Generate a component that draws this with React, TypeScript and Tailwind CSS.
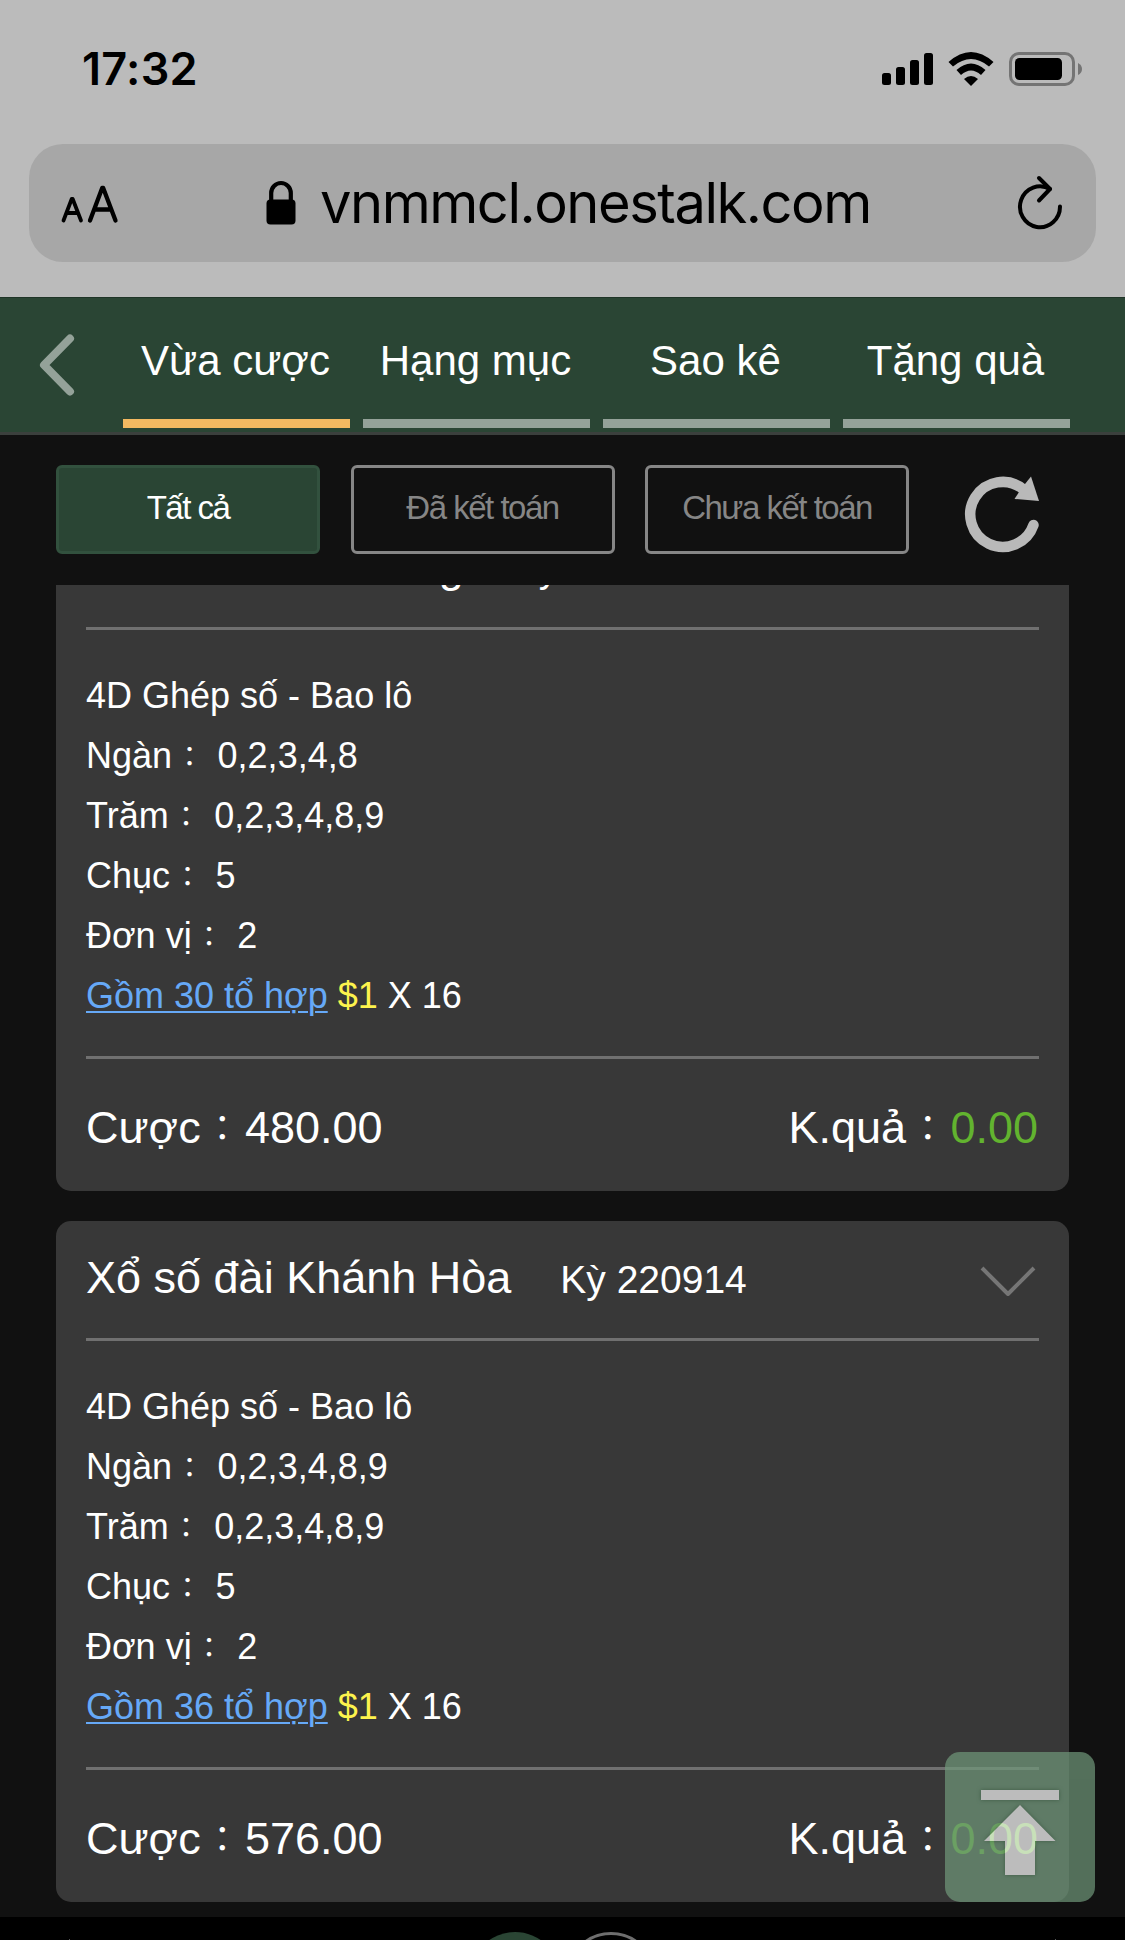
import React from "react";

const tabs = ["Vừa cược", "Hạng mục", "Sao kê", "Tặng quà"];
const filters = ["Tất cả", "Đã kết toán", "Chưa kết toán"];

type Bet = {
  title: string;
  period: string;
  rows: [string, string][];
  combos: string;
  stake: string;
  result: string;
};

const bets: Bet[] = [
  {
    title: "Xổ số đài Đà Nẵng",
    period: "Kỳ 220914",
    rows: [
      ["Ngàn", "0,2,3,4,8"],
      ["Trăm", "0,2,3,4,8,9"],
      ["Chục", "5"],
      ["Đơn vị", "2"],
    ],
    combos: "Gồm 30 tổ hợp",
    stake: "480.00",
    result: "0.00",
  },
  {
    title: "Xổ số đài Khánh Hòa",
    period: "Kỳ 220914",
    rows: [
      ["Ngàn", "0,2,3,4,8,9"],
      ["Trăm", "0,2,3,4,8,9"],
      ["Chục", "5"],
      ["Đơn vị", "2"],
    ],
    combos: "Gồm 36 tổ hợp",
    stake: "576.00",
    result: "0.00",
  },
];

function Colon() {
  return (
    <span className="relative -top-[0.05em] pr-[0.145em] pl-[0.12em] font-['Noto_Sans_CJK_TC',sans-serif] text-[0.78em] leading-none">
      ：
    </span>
  );
}

function StatusBar() {
  return (
    <div className="flex h-[144px] items-start justify-between pt-[52px] pr-[42px] pl-[82px] text-black">
      <div className="font-['Inter',sans-serif] text-[45px] leading-[34px] font-semibold tracking-[0.3px]">17:32</div>
      <svg width="201" height="34" viewBox="0 0 201 34">
        <rect x="0" y="21" width="9" height="12" rx="2.5" />
        <rect x="14" y="15" width="9" height="18" rx="2.5" />
        <rect x="28" y="8" width="9" height="25" rx="2.5" />
        <rect x="42" y="1" width="9" height="32" rx="2.5" />
        <g transform="translate(66.500 0)">
          <path d="M0 10 Q22.500 -10 45 10 L40.500 14.500 Q22.500 -0.500 4.500 14.500Z" />
          <path d="M8 18 Q22.500 5 37 18 L32.500 23 Q22.500 14 12.500 23Z" />
          <path d="M15.500 27 Q22.500 21 29.500 27 L22.500 34Z" />
        </g>
        <rect x="128.500" y="1.500" width="63" height="31" rx="8.500" fill="none" stroke="#747474" strokeWidth="3" />
        <rect x="133" y="6" width="47" height="22" rx="4.500" />
        <path d="M196 11 Q200 13 200 17 Q200 21 196 23Z" fill="#747474" />
      </svg>
    </div>
  );
}

function AddressBar() {
  return (
    <div className="mr-[29px] ml-[29px] flex h-[118px] items-center rounded-[34px] bg-[#a7a7a7] text-black">
      <svg className="ml-[31px] shrink-0" width="60" height="44" viewBox="0 0 60 44" fill="none" stroke="#000" strokeWidth="4.300" strokeLinecap="round" strokeLinejoin="round">
        <path d="M3.500 39.500 L11.700 18 H12.700 L21 39.500 M6.500 32 H17.500" strokeWidth="3.800" />
        <path d="M30 39.500 L42.200 7 H43.200 L55.500 39.500 M34.500 28.500 H50.500" />
      </svg>
      <svg className="ml-[146px] shrink-0" width="30" height="46" viewBox="0 0 30 46">
        <path d="M5.200 22 V13 A9.800 10 0 0 1 24.800 13 V22" fill="none" stroke="#000" strokeWidth="4.200" />
        <rect x="0.500" y="19.500" width="29" height="25" rx="4" />
      </svg>
      <div className="ml-[24px] font-['Inter',sans-serif] text-[56px] leading-[60px] tracking-[-1.45px] whitespace-nowrap">vnmmcl.onestalk.com</div>
      <svg className="relative -top-px mr-[31px] ml-auto shrink-0" width="50" height="56" viewBox="0 0 50 56" fill="none" stroke="#000" strokeWidth="4" strokeLinecap="round" strokeLinejoin="round">
        <path d="M45 32.500 A20 20.500 0 1 1 35 15" />
        <path d="M24 4 L35 15 L24 26.500" />
      </svg>
    </div>
  );
}

function TabBar() {
  return (
    <div className="flex h-[138px] border-t border-b-[3px] border-t-[#1f3427] border-b-[#3b403d] bg-[#2a4534]">
      <svg className="mt-[35px] ml-[38px] shrink-0" width="38" height="64" viewBox="0 0 38 64" fill="none" stroke="#94a299" strokeWidth="8" strokeLinecap="round" strokeLinejoin="round">
        <path d="M32 5.500 L6 32 L32 58.500" />
      </svg>
      <div className="ml-[47px] flex gap-[13px]">
        {tabs.map((t, i) => (
          <div
            key={t}
            className={
              "h-[130px] w-[227px] border-b-[9px] pt-[38px] pr-[2px] text-center text-[42px] leading-[50px] whitespace-nowrap text-white " +
              (i === 0 ? "border-[#f3b961]" : "border-[#94a299]")
            }
          >
            {t}
          </div>
        ))}
      </div>
    </div>
  );
}

function FilterBar() {
  return (
    <div className="flex h-[150px] items-start gap-[30.5px] pt-[30px] pl-[56px]">
      {filters.map((f, i) => (
        <div
          key={f}
          className={
            "h-[89px] w-[264px] rounded-[6px] border-[3px] text-center text-[33px] leading-[80px] tracking-[-1.5px] whitespace-nowrap " +
            (i === 0 ? "border-[#32513e] bg-[#2a4534] text-white" : "border-[#868686] text-[#868686]")
          }
        >
          {f}
        </div>
      ))}
      <svg className="mt-[10px] ml-[24px]" width="78" height="78" viewBox="0 0 78 78">
        <path d="M69.500 50 A32.500 32.500 0 1 1 59 14" fill="none" stroke="#b9b9b9" strokeWidth="10.500" strokeLinecap="round" />
        <path d="M67 1.500 L75 26 L50.500 24 L55 17 L61 9Z" fill="#b9b9b9" />
      </svg>
    </div>
  );
}

function BetCard({ bet }: { bet: Bet }) {
  return (
    <div className="h-[681px] rounded-[15px] bg-[#383838] px-[30px] text-white">
      <div className="flex h-[120px] items-start border-b-[3px] border-[#707070]">
        <div className="flex items-baseline pt-[27px] whitespace-nowrap">
          <div className="text-[45px] leading-[60px]">{bet.title}</div>
          <div className="ml-[49px] text-[39px] leading-[60px]">{bet.period}</div>
        </div>
        <svg className="mt-[45px] mr-[3px] ml-auto" width="56" height="30" viewBox="0 0 56 30" fill="none" stroke="#767676" strokeWidth="4" strokeLinejoin="round">
          <path d="M2 2 L28 28 L54 2" />
        </svg>
      </div>
      <div className="h-[429px] border-b-[3px] border-[#707070] pt-[36px] text-[36px] leading-[60px] whitespace-nowrap">
        <div className="h-[60px]">4D Ghép số - Bao lô</div>
        {bet.rows.map(([label, value]) => (
          <div key={label} className="h-[60px]">
            {label}
            <Colon /> {value}
          </div>
        ))}
        <div className="h-[60px]">
          <span className="text-[#66a9f7] underline decoration-[2px] underline-offset-[3px]">{bet.combos}</span>{" "}
          <span className="text-[#fdf34d]">$1</span> X 16
        </div>
      </div>
      <div className="flex justify-between pt-[39px] text-[45px] leading-[60px] whitespace-nowrap">
        <div>
          Cược
          <Colon />
          {bet.stake}
        </div>
        <div className="pr-px">
          K.quả
          <Colon />
          <span className="text-[#62b32f]">{bet.result}</span>
        </div>
      </div>
    </div>
  );
}

export default function App() {
  return (
    <div className="relative h-[1940px] w-[1125px] overflow-hidden bg-[#111111] font-['Liberation_Sans','Noto_Sans_CJK_TC',sans-serif]">
      <div className="h-[297px] bg-[#bbbbbb]">
        <StatusBar />
        <AddressBar />
      </div>
      <TabBar />
      <FilterBar />
      <div className="h-[1332px] overflow-hidden px-[56px]">
        <div className="-mt-[75px] flex flex-col gap-[30px]">
          {bets.map((b) => (
            <BetCard key={b.title} bet={b} />
          ))}
        </div>
      </div>
      <div className="flex h-[23px] items-start justify-between overflow-hidden bg-black pr-[69px] pl-[69px]">
        <div className="mt-[22px] h-px w-px bg-[#555]" />
        <div className="flex gap-[6px] pt-[15px]">
          <div className="size-[90px] rounded-full bg-[#2a4534]" />
          <div className="size-[90px] rounded-full border-[3px] border-[#6e6e6e]" />
        </div>
        <div className="mt-[22px] h-px w-px bg-[#555]" />
      </div>
      <div className="absolute top-[1752px] left-[945px] size-[150px] rounded-[15px] bg-[#70987a] opacity-70">
        <svg className="drop-shadow-[0_0_2px_rgba(20,60,30,0.5)]" width="150" height="150" viewBox="0 0 150 150" fill="#f4f4f4">
          <rect x="36" y="38" width="78" height="10" />
          <path d="M75 53 L110.500 89 H90 V123 H60 V89 H39Z" />
        </svg>
      </div>
    </div>
  );
}
